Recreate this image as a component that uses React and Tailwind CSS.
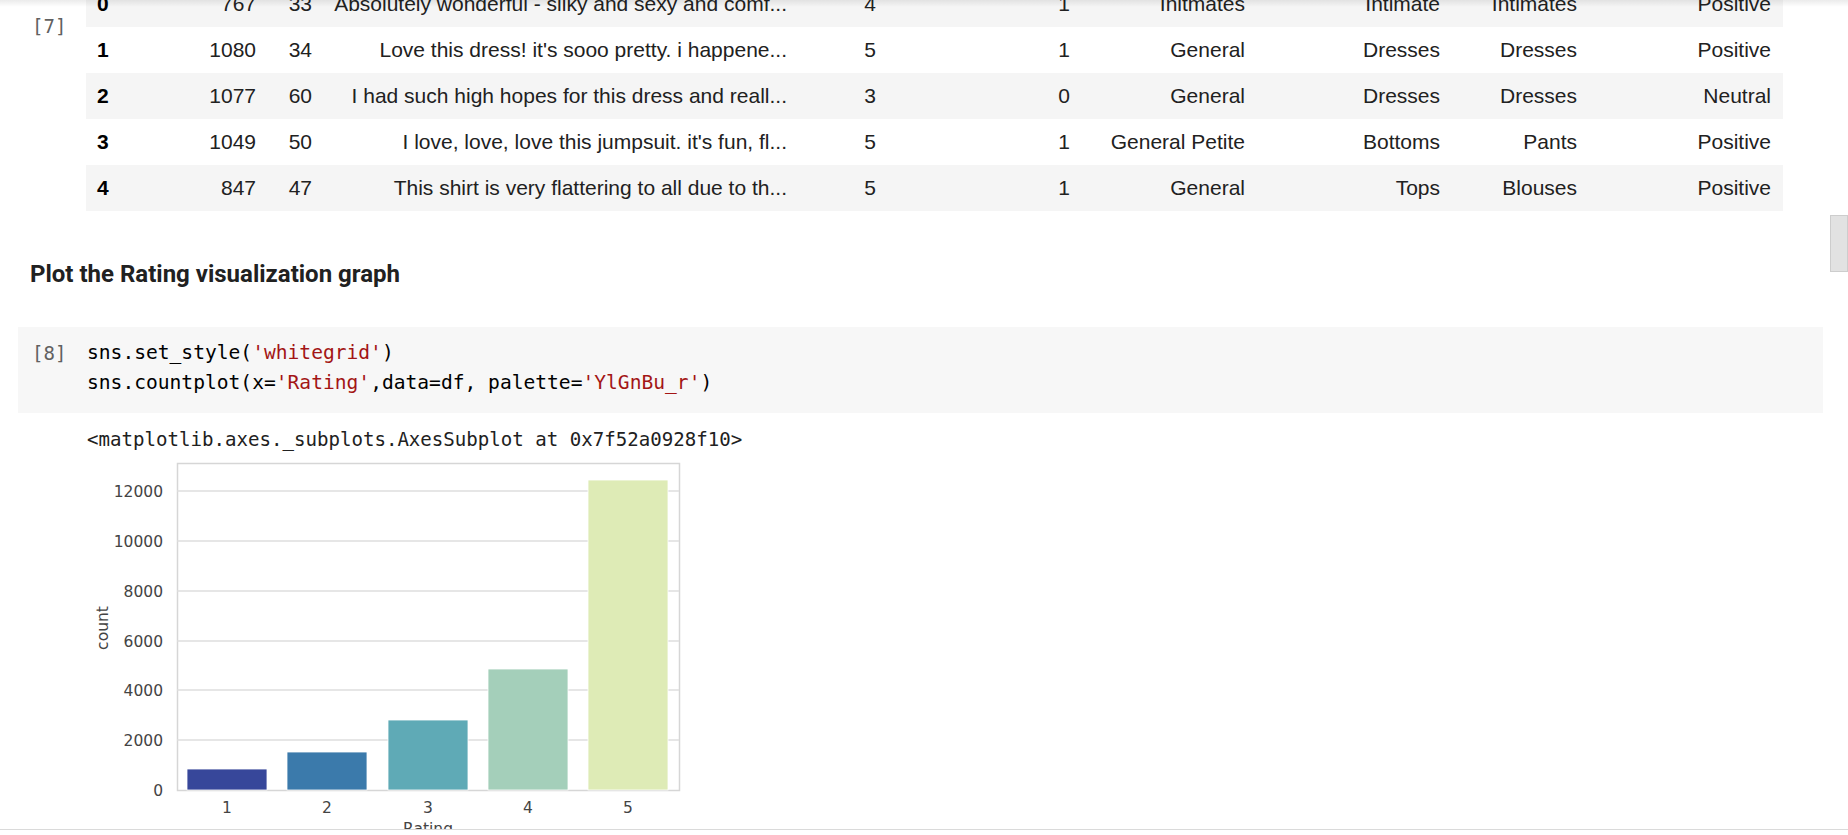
import React from 'react'

const rows = [
  ['0', '767', '33', 'Absolutely wonderful - silky and sexy and comf...', '4', '1', 'Initmates', 'Intimate', 'Intimates', 'Positive'],
  ['1', '1080', '34', "Love this dress! it's sooo pretty. i happene...", '5', '1', 'General', 'Dresses', 'Dresses', 'Positive'],
  ['2', '1077', '60', 'I had such high hopes for this dress and reall...', '3', '0', 'General', 'Dresses', 'Dresses', 'Neutral'],
  ['3', '1049', '50', "I love, love, love this jumpsuit. it's fun, fl...", '5', '1', 'General Petite', 'Bottoms', 'Pants', 'Positive'],
  ['4', '847', '47', 'This shirt is very flattering to all due to th...', '5', '1', 'General', 'Tops', 'Blouses', 'Positive'],
]

const bars = [
  { x: 187, top: 769, fill: '#37479a' },
  { x: 287, top: 752, fill: '#3b7aab' },
  { x: 388, top: 720, fill: '#5faab6' },
  { x: 488, top: 669, fill: '#a4cfba' },
  { x: 588, top: 480, fill: '#deebb6' },
]

const grid = [
  { y: 491, label: '12000' },
  { y: 541, label: '10000' },
  { y: 591, label: '8000' },
  { y: 641, label: '6000' },
  { y: 690, label: '4000' },
  { y: 740, label: '2000' },
  { y: 790, label: '0' },
]

function Chart() {
  const font = { fontFamily: '"DejaVu Sans", sans-serif' }
  return (
    <svg width="620" height="376" viewBox="80 453 620 376" className="ml-[80px] block">
      <rect x="177.5" y="463.5" width="502" height="327" fill="#ffffff" stroke="#d6d6d6" strokeWidth="1.5" />
      {grid.slice(0, 6).map((g) => (
        <line key={g.y} x1="177" x2="679" y1={g.y} y2={g.y} stroke="#dedede" strokeWidth="1.5" />
      ))}
      {bars.map((b, i) => (
        <rect key={i} x={b.x} y={b.top} width="80" height={790 - b.top} fill={b.fill} stroke="#ffffff" strokeWidth="0.8" />
      ))}
      {grid.map((g) => (
        <text key={g.label} x="163" y={g.y + 5.5} textAnchor="end" fontSize="15.5" fill="#444" style={font}>{g.label}</text>
      ))}
      {bars.map((b, i) => (
        <text key={i} x={b.x + 40} y="813" textAnchor="middle" fontSize="15.5" fill="#444" style={font}>{i + 1}</text>
      ))}
      <text x="428" y="834" textAnchor="middle" fontSize="15.5" fill="#444" style={font}>Rating</text>
      <text x="108" y="628" textAnchor="middle" fontSize="15.5" fill="#444" style={font} transform="rotate(-90 108 628)">count</text>
    </svg>
  )
}

export default function App() {
  return (
    <div className="relative h-[835px] w-[1848px] overflow-hidden bg-white text-[#212121]">
      <div className="h-[829px] overflow-hidden">
        {/* dataframe output of cell 7 */}
        <div className="-mt-[19px] flex">
          <div className="w-[86px] shrink-0 pl-[32px] pt-[31px] text-[19px] leading-[28px] text-[#616161] font-['DejaVu_Sans_Mono',monospace]">[7]</div>
          <div className="font-['Liberation_Sans',Arial,sans-serif] text-[21px]">
            {rows.map((r, i) => (
              <div
                key={r[0]}
                className={`grid h-[46px] grid-cols-[64px_118px_56px_475px_89px_194px_175px_195px_137px_194px] items-center ${i % 2 === 0 ? 'bg-[#f5f5f5]' : 'bg-white'}`}
              >
                <div className="pl-[11px] font-bold text-black">{r[0]}</div>
                {r.slice(1).map((c, j) => (
                  <div key={j} className="whitespace-nowrap pr-[12px] text-right">{c}</div>
                ))}
              </div>
            ))}
          </div>
        </div>

        {/* markdown heading */}
        <h3 className="mt-[47px] pl-[30px] text-[24px] leading-[32px] font-bold font-['Roboto',sans-serif] text-[#212121]">
          Plot the Rating visualization graph
        </h3>

        {/* code cell 8 */}
        <div className="ml-[18px] mt-[37px] flex h-[86px] w-[1805px] bg-[#f7f7f7] pl-[14px] pt-[11px] font-['DejaVu_Sans_Mono',monospace]">
          <div className="w-[55px] shrink-0 text-[19px] leading-[30px] text-[#616161]">[8]</div>
          <pre className="text-[19.6px] leading-[30px] text-[#000] font-['DejaVu_Sans_Mono',monospace]">
            sns.set_style(<span className="text-[#a31515]">'whitegrid'</span>){'\n'}
            sns.countplot(x=<span className="text-[#a31515]">'Rating'</span>,data=df, palette=<span className="text-[#a31515]">'YlGnBu_r'</span>)
          </pre>
        </div>

        {/* output */}
        <div className="mt-[14px] pl-[87px] text-[19.1px] leading-[26px] text-[#212121] font-['DejaVu_Sans_Mono',monospace] whitespace-pre">
          {'<matplotlib.axes._subplots.AxesSubplot at 0x7f52a0928f10>'}
        </div>
        <Chart />
      </div>
      <div className="h-[6px] border-t border-[#dadada] bg-white" />

      {/* top shadow from the sticky toolbar */}
      <div className="pointer-events-none absolute left-0 right-0 top-0 h-[7px] bg-gradient-to-b from-[#00000014] to-transparent" />
      {/* scrollbar thumb */}
      <div className="absolute right-0 top-[215px] h-[57px] w-[18px] border border-[#cdcdcd] bg-[#e2e2e2]" />
    </div>
  )
}
